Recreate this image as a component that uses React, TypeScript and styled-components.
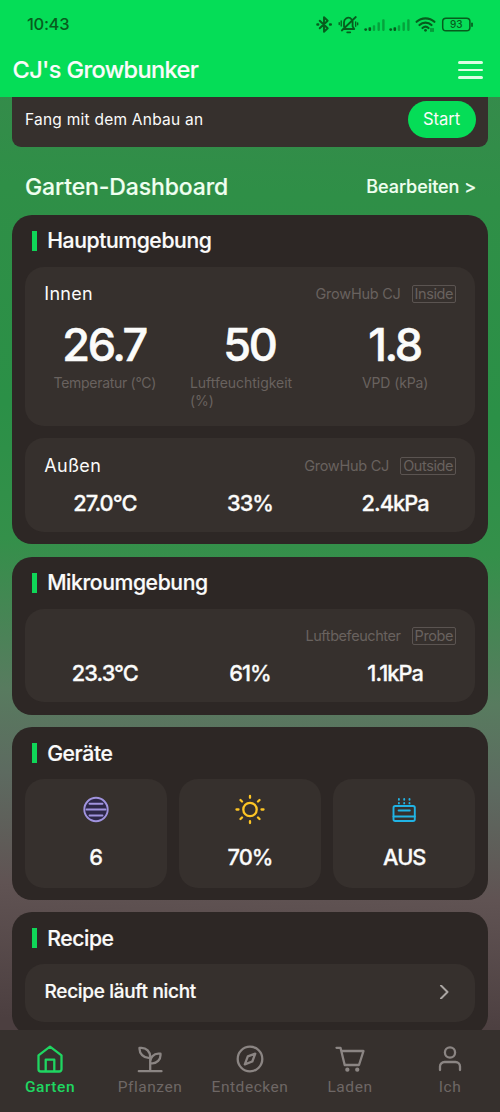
import React from 'react';
import styled, { createGlobalStyle } from 'styled-components';

const Global = createGlobalStyle`
  * { box-sizing: border-box; }
  html, body { margin: 0; padding: 0; }
  body { background: #4f4243; overflow: hidden; }
`;

const Screen = styled.div`
  display: flex;
  flex-direction: column;
  width: 500px;
  height: 1112px;
  overflow: hidden;
  font-family: Inter, 'Liberation Sans', sans-serif;
  color: #fbfbfa;
  background: linear-gradient(182deg, #358b4b 95px, #2f8f47 200px, #2b9047 420px, #34904a 555px, #587b5f 705px, #5d6a60 790px, #605353 900px, #4c3f40 1035px);
`;

const Header = styled.header`
  flex: none;
  height: 97px;
  background: #05dd57;
`;

const StatusBar = styled.div`
  height: 47px;
  padding: 0 27px;
  display: flex;
  align-items: center;
  justify-content: space-between;
  color: #075c1d;
`;

const Clock = styled.span`
  font: 500 16.5px/20px Inter, sans-serif;
  letter-spacing: -0.3px;
`;

const StatusIcons = styled.svg`
  display: block;
  width: 158px;
  height: 20px;
`;

const TitleBar = styled.div`
  height: 47px;
  padding: 0 17px 1px 12.5px;
  display: flex;
  align-items: center;
  justify-content: space-between;
`;

const AppTitle = styled.h1`
  margin: 0;
  font-size: 23.5px;
  font-weight: 500;
  line-height: 30px;
  letter-spacing: -0.6px;
  -webkit-text-stroke: 0.15px currentColor;
`;

const MenuButton = styled.div`
  display: flex;
  flex-direction: column;
  gap: 5px;
  width: 25px;
`;

const MenuLine = styled.span`
  height: 2.4px;
  border-radius: 2px;
  background: #dcfde3;
`;

const Content = styled.main`
  flex: 1;
  min-height: 0;
  overflow: hidden;
  padding: 0 12.4px;
`;

const StartCard = styled.section`
  height: 50.3px;
  padding: 0 12px 6px 12.6px;
  border-radius: 0 0 9px 9px;
  background: #36302d;
  display: flex;
  align-items: center;
  justify-content: space-between;
`;

const StartText = styled.span`
  padding-top: 2px;
  font-size: 15.5px;
  line-height: 20px;
  letter-spacing: 0.24px;
`;

const StartButton = styled.div`
  width: 68px;
  height: 37px;
  border-radius: 19px;
  background: #05dd57;
  font-size: 16.6px;
  line-height: 36px;
  text-align: center;
`;

const DashboardTitle = styled.div`
  height: 67.6px;
  padding: 11px 11.5px 0 12.6px;
  display: flex;
  align-items: center;
  justify-content: space-between;
  color: #effff0;
`;

const DashboardName = styled.h2`
  margin: 0;
  font-size: 23px;
  font-weight: 500;
  line-height: 30px;
  letter-spacing: -0.12px;
  -webkit-text-stroke: 0.15px currentColor;
`;

const EditLink = styled.span`
  padding-top: 1px;
  font-size: 18px;
  font-weight: 500;
  line-height: 24px;
  letter-spacing: -0.05px;
  -webkit-text-stroke: 0.15px currentColor;
`;

const Card = styled.section`
  margin-bottom: 12.4px;
  padding: 0 12.4px 12.4px;
  border-radius: 20px;
  background: #2d2725;
`;

const CardHeading = styled.h3`
  height: 52.2px;
  margin: 0;
  padding: 0 0 1px 7px;
  display: flex;
  align-items: center;
  gap: 10.4px;
  font-size: 21.2px;
  font-weight: 500;
  line-height: 28px;
  letter-spacing: -0.42px;
  -webkit-text-stroke: 0.2px currentColor;

  &::before {
    content: '';
    width: 5px;
    height: 20px;
    margin-top: 1px;
    background: #0fd658;
  }
`;

const Panel = styled.div<{ $height: number }>`
  height: ${(p) => p.$height}px;
  padding: 15.3px 19.5px 0;
  border-radius: 19px;
  background: #36302d;

  & + & { margin-top: 12.3px; }
`;

const PanelHead = styled.div`
  height: 24px;
  display: flex;
  align-items: center;
  justify-content: space-between;
`;

const PanelName = styled.span`
  font-size: 18px;
  line-height: 24px;
  letter-spacing: 0.3px;
`;

const Source = styled.span<{ $spacing: number }>`
  display: flex;
  align-items: center;
  gap: 11px;
  color: #69625f;
  font-size: 14.5px;
  line-height: 18px;
  letter-spacing: ${(p) => p.$spacing}px;
`;

const Tag = styled.span`
  height: 18px;
  padding: 0 1.6px 0 2px;
  border: 1px solid #5b5451;
  border-radius: 2px;
  font-size: 14.5px;
  line-height: 16px;
  letter-spacing: -0.4px;
`;

const Columns = styled.div<{ $top: number }>`
  margin: ${(p) => p.$top}px -12px 0;
  display: grid;
  grid-template-columns: repeat(3, 1fr);
`;

const Metric = styled.div`
  padding: 0 12.5px;
  display: flex;
  flex-direction: column;
  align-items: center;
`;

const BigValue = styled.span`
  font-size: 45px;
  font-weight: 500;
  line-height: 54px;
  letter-spacing: -2.4px;
  text-indent: -1.4px;
  -webkit-text-stroke: 0.6px currentColor;
`;

const MetricLabel = styled.span<{ $spacing: number }>`
  margin-top: 2.5px;
  color: #69625f;
  font-size: 14px;
  line-height: 18px;
  letter-spacing: ${(p) => p.$spacing}px;
`;

const SmallValue = styled.span`
  font-size: 21.8px;
  font-weight: 500;
  line-height: 28px;
  letter-spacing: -0.95px;
  text-align: center;
  -webkit-text-stroke: 0.3px currentColor;
`;

const DeviceGrid = styled.div`
  display: grid;
  grid-template-columns: repeat(3, 1fr);
  gap: 12.4px;
`;

const Device = styled.div`
  height: 108.2px;
  padding-top: 14.6px;
  border-radius: 19px;
  background: #36302d;
  display: flex;
  flex-direction: column;
  align-items: center;
  gap: 16.9px;
`;

const RecipeRow = styled.div`
  height: 58px;
  padding: 0 24px 3px 19.8px;
  border-radius: 19px;
  background: #36302d;
  display: flex;
  align-items: center;
  justify-content: space-between;
`;

const RecipeText = styled.span`
  font-size: 19px;
  font-weight: 500;
  line-height: 24px;
  letter-spacing: -0.32px;
  -webkit-text-stroke: 0.2px currentColor;
`;

const NavBar = styled.nav`
  flex: none;
  height: 82.5px;
  background: #36302d;
  display: grid;
  grid-template-columns: repeat(5, 1fr);
`;

const NavItem = styled.div<{ $active?: boolean }>`
  padding-top: 13px;
  display: flex;
  flex-direction: column;
  align-items: center;
  gap: 2px;
  color: ${(p) => (p.$active ? '#1fd661' : '#8b8583')};

  svg { stroke-width: 2.3; }
`;

const NavLabel = styled.span<{ $active?: boolean }>`
  font: ${(p) => (p.$active ? 500 : 400)} 15.5px/20px Roboto, sans-serif;
  letter-spacing: 0.55px;
  color: ${(p) => (p.$active ? '#1fd661' : '#6e6765')};
`;

const Icon = styled.svg<{ $size?: number }>`
  display: block;
  width: ${(p) => p.$size ?? 32}px;
  height: ${(p) => p.$size ?? 32}px;
  fill: none;
  stroke: currentColor;
  stroke-width: 2;
  stroke-linecap: round;
  stroke-linejoin: round;
`;

const fadedBars = [4.7, 9.4, 14.1];

function Signal({ x }: { x: number }) {
  return (
    <g fill="#075c1d" stroke="none" transform={`translate(${x} 13)`}>
      <circle cx="1.2" cy="15.600" r="1.400" />
      <rect x="4" y="13.300" width="2.600" height="3.600" rx="0.800" />
      {fadedBars.map((b, i) => (
        <rect key={b} x={3.6 + b} y={11.3 - i * 3} width="2.400" height={5.6 + i * 3} rx="0.800" opacity="0.450" />
      ))}
    </g>
  );
}

function StatusGlyphs() {
  return (
    <StatusIcons viewBox="315 13 158 20" fill="none" stroke="#075c1d" strokeLinecap="round" strokeLinejoin="round">
      <path d="M319.7 19.7l8 7.6-3.7 3.5V16.2l3.7 3.5-8 7.6" strokeWidth="1.9" />
      <path d="M317.4 23.5h.8M330 23.5h.8" strokeWidth="2.4" />
      <path d="M343 28h11.200l-1.600-2.600v-4.200a4.600 4.600 0 0 0-2.200-4M350.300 17a4.600 4.600 0 0 0-6.300 4.200v4.200M341.800 29.500L355.800 16M347.200 31.300h3" strokeWidth="1.800" />
      <path d="M341.200 20v5M339.200 21.600v2M355.700 21v4.300M357.700 21.800v2" strokeWidth="1.300" />
      <Signal x={364.5} />
      <Signal x={389.5} />
      <path d="M416.600 20.800a13 13 0 0 1 17.800 0M419.500 24a8.700 8.700 0 0 1 12 0M422.500 27a4.500 4.500 0 0 1 6 0" strokeWidth="2.200" />
      <circle cx="425.500" cy="29.300" r="1.400" fill="#075c1d" stroke="none" />
      <path d="M431 27.500v3M433 27.500v3" strokeWidth="1" />
      <rect x="442.700" y="17.300" width="27.200" height="12.400" rx="3.300" strokeWidth="1.500" />
      <path d="M472 22.300v2.800" strokeWidth="1.700" />
      <text x="456.300" y="27.300" textAnchor="middle" fill="#075c1d" stroke="none" fontFamily="Inter, sans-serif" fontSize="10" fontWeight="500">93</text>
    </StatusIcons>
  );
}

function SourceLabel({ name, tag, spacing = -0.25 }: { name: string; tag: string; spacing?: number }) {
  return (
    <Source $spacing={spacing}>
      {name}
      <Tag>{tag}</Tag>
    </Source>
  );
}

function SmallValues({ values }: { values: string[] }) {
  return (
    <Columns $top={11}>
      {values.map((v) => (
        <SmallValue key={v}>{v}</SmallValue>
      ))}
    </Columns>
  );
}

const climate = [
  { value: '26.7', label: 'Temperatur (°C)', spacing: -0.3 },
  { value: '50', label: 'Luftfeuchtigkeit (%)', spacing: -0.03 },
  { value: '1.8', label: 'VPD (kPa)', spacing: -0.1 },
];

const devices = [
  {
    value: '6',
    icon: (
      <g stroke="#a093de" strokeWidth="1.9">
        <circle cx="16" cy="15.500" r="11.700" fill="#2d2748" />
        <path d="M9.500 9.700h13M6.500 15.500h19M9.500 21.500h13" />
      </g>
    ),
  },
  {
    value: '70%',
    icon: (
      <g stroke="#fdc525" strokeWidth="2.300">
        <circle cx="16" cy="15.500" r="6.700" />
        <path d="M16 2v1.800M16 27.200v1.800M2.500 15.500h2M27.500 15.500h2M6.500 6l1.500 1.500M24 23.500l1.500 1.500M25.500 6l-1.500 1.500M8 23.500L6.500 25" />
      </g>
    ),
  },
  {
    value: 'AUS',
    icon: (
      <g stroke="#21b3e4" strokeWidth="1.900">
        <rect x="5.500" y="12" width="21.300" height="15" rx="1.800" />
        <path d="M5.500 22.500h21.300M10.600 16.500h11.200" />
        <path d="M10.900 5v.8M16.200 5v.8M21.500 5v.8M10.900 9v.4M16.200 9v.4M21.500 9v.4" />
      </g>
    ),
  },
];

const tabs = [
  {
    label: 'Garten',
    icon: <path d="M4.500 12.300L16 3.700l11.500 8.600v14a2.200 2.200 0 0 1-2.200 2.200H6.700a2.200 2.200 0 0 1-2.200-2.200zM11.700 28.300V16.700h8.600v11.600" />,
  },
  {
    label: 'Pflanzen',
    icon: (
      <path d="M4.800 28.200h22.700M16.200 28V14.800M16.200 14.800h-1.700c-5 0-9-4-9-9V4.800h1.900c5 0 8.800 4 8.800 9zM16.200 20.300v-1.500c0-4.500 3.600-8.100 8.100-8.100h2.200v1.500c0 4.500-3.600 8.100-8.100 8.100z" />
    ),
  },
  {
    label: 'Entdecken',
    icon: (
      <>
        <circle cx="16" cy="16" r="12.300" />
        <path d="M21.300 10.700l-7.500 2.700-3 8 7.500-2.900z" />
      </>
    ),
  },
  {
    label: 'Laden',
    icon: (
      <>
        <path d="M2.500 4.800h4L10.700 22H25l4.500-14H7.500" />
        <path d="M13.300 26.700h.1M23.200 26.700h.1" strokeWidth="4.200" />
      </>
    ),
  },
  {
    label: 'Ich',
    icon: (
      <>
        <circle cx="16" cy="9.500" r="5.100" />
        <path d="M6 27v-3.500a4.500 4.500 0 0 1 4.500-4.500h11a4.500 4.500 0 0 1 4.500 4.500V27" />
      </>
    ),
  },
];

export default function App() {
  return (
    <Screen>
      <Global />
      <Header>
        <StatusBar>
          <Clock>10:43</Clock>
          <StatusGlyphs />
        </StatusBar>
        <TitleBar>
          <AppTitle>CJ's Growbunker</AppTitle>
          <MenuButton>
            <MenuLine />
            <MenuLine />
            <MenuLine />
          </MenuButton>
        </TitleBar>
      </Header>
      <Content>
        <StartCard>
          <StartText>Fang mit dem Anbau an</StartText>
          <StartButton>Start</StartButton>
        </StartCard>
        <DashboardTitle>
          <DashboardName>Garten-Dashboard</DashboardName>
          <EditLink>Bearbeiten &gt;</EditLink>
        </DashboardTitle>
        <Card>
          <CardHeading>Hauptumgebung</CardHeading>
          <Panel $height={159}>
            <PanelHead>
              <PanelName>Innen</PanelName>
              <SourceLabel name="GrowHub CJ" tag="Inside" />
            </PanelHead>
            <Columns $top={11.5}>
              {climate.map((m) => (
                <Metric key={m.label}>
                  <BigValue>{m.value}</BigValue>
                  <MetricLabel $spacing={m.spacing}>{m.label}</MetricLabel>
                </Metric>
              ))}
            </Columns>
          </Panel>
          <Panel $height={93.5}>
            <PanelHead>
              <PanelName>Außen</PanelName>
              <SourceLabel name="GrowHub CJ" tag="Outside" />
            </PanelHead>
            <SmallValues values={['27.0°C', '33%', '2.4kPa']} />
          </Panel>
        </Card>
        <Card>
          <CardHeading>Mikroumgebung</CardHeading>
          <Panel $height={93.5}>
            <PanelHead>
              <PanelName />
              <SourceLabel name="Luftbefeuchter" tag="Probe" spacing={-0.42} />
            </PanelHead>
            <SmallValues values={['23.3°C', '61%', '1.1kPa']} />
          </Panel>
        </Card>
        <Card>
          <CardHeading>Geräte</CardHeading>
          <DeviceGrid>
            {devices.map((d) => (
              <Device key={d.value}>
                <Icon viewBox="0 0 32 32">{d.icon}</Icon>
                <SmallValue>{d.value}</SmallValue>
              </Device>
            ))}
          </DeviceGrid>
        </Card>
        <Card>
          <CardHeading>Recipe</CardHeading>
          <RecipeRow>
            <RecipeText>Recipe läuft nicht</RecipeText>
            <Icon viewBox="0 0 14 14" $size={14} color="#aaa5a2">
              <path d="M4 0.500l6.500 6.500L4 13.500" />
            </Icon>
          </RecipeRow>
        </Card>
      </Content>
      <NavBar>
        {tabs.map((t, i) => (
          <NavItem key={t.label} $active={i === 0}>
            <Icon viewBox="0 0 32 32">{t.icon}</Icon>
            <NavLabel $active={i === 0}>{t.label}</NavLabel>
          </NavItem>
        ))}
      </NavBar>
    </Screen>
  );
}
